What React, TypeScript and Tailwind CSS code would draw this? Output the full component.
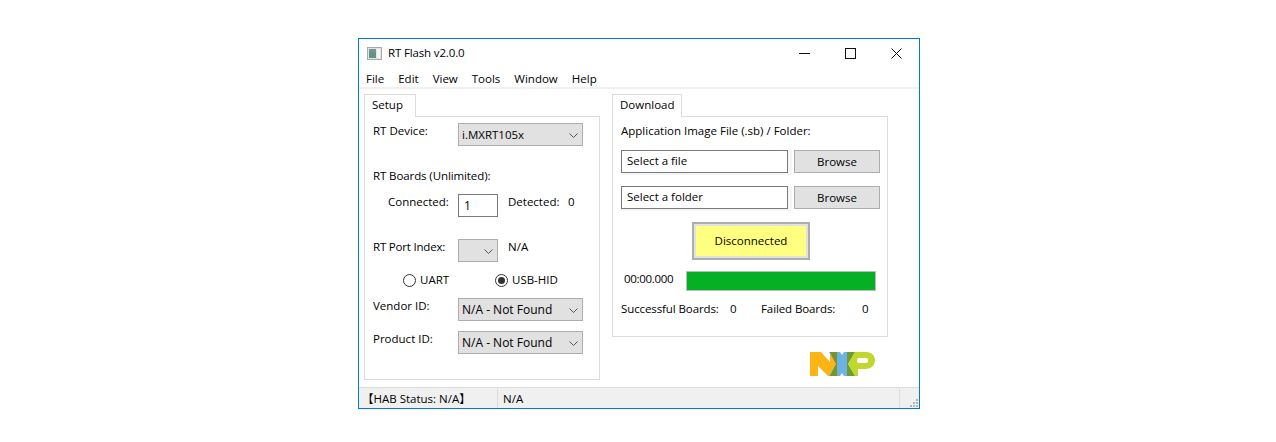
const Chevron = () => (
  <svg width="9" height="5" viewBox="0 0 9 5" className="shrink-0">
    <path d="M0.5 0.5L4.5 4.5L8.5 0.5" fill="none" stroke="#555" />
  </svg>
);

const Combo = ({ value, className }: { value?: string; className: string }) => (
  <div className={`flex h-[23px] items-center justify-between border border-[#adadad] bg-[#e1e1e1] pl-[3px] pr-[4px] pt-[1px] ${className}`}>
    <span>{value}</span>
    <Chevron />
  </div>
);

const Radio = ({ label, checked }: { label: string; checked?: boolean }) => (
  <div className="flex items-center gap-[4px]">
    <span className="flex h-[13px] w-[13px] items-center justify-center rounded-full border border-[#333] bg-white">
      {checked && <span className="h-[7px] w-[7px] rounded-full bg-[#333]" />}
    </span>
    <span>{label}</span>
  </div>
);

const PathRow = ({ text, className }: { text: string; className: string }) => (
  <div className={`flex items-start ${className}`}>
    <div className="bg-[#f6f6f6] pr-[4px] pb-[2px]">
      <div className="flex h-[23px] w-[167px] items-center border border-[#7a7a7a] bg-white pb-[2px] pl-[5px]">{text}</div>
    </div>
    <button className="ml-[2px] h-[23px] w-[86px] border border-[#adadad] bg-[#e1e1e1] text-center">Browse</button>
  </div>
);

const NxpLogo = () => (
  <svg width="65" height="24" viewBox="0 0 65 24">
    <path d="M0 0H11L20 10V0H27V24H18L8 14V24H0Z" fill="#fdb515" />
    <path d="M19 0H30L32 3L34 0H45L38 12L45 24H34L32 21L30 24H19L26 12Z" fill="#6cb2e6" />
    <path d="M20 0H27V24H20L26 12Z" fill="#7b9424" />
    <path d="M37 0H45L38 12L45 24H37Z" fill="#6f9c2f" />
    <path d="M45 0H56C61 0 65 3 65 8C65 13 61 17 56 17H48V24H45L38 12Z" fill="#c1d72e" />
    <rect x="47" y="6" width="11" height="5" rx="2" fill="#ffffff" />
  </svg>
);

export default function App() {
  return (
    <div className="flex h-[442px] w-[1276px] bg-white pt-[38px] pl-[358px] font-['Open_Sans','Noto_Sans_CJK_SC',sans-serif] text-[11.5px] leading-[16px] text-black">
      <div className="flex h-[371px] w-[562px] flex-col border border-[#0078d7] bg-white">
        {/* title bar */}
        <div className="flex h-[28px] shrink-0 items-center pl-[8px]">
          <svg width="15" height="13" viewBox="0 0 15 13" className="mr-[6px]">
            <rect width="15" height="13" fill="#a8a8a8" />
            <rect x="1" y="1" width="13" height="11" fill="#e4e4e4" />
            <rect x="2" y="2" width="7" height="9" fill="#5f9388" />
            <rect x="2" y="2" width="7" height="3" fill="#7d8f99" />
            <rect x="10" y="2" width="3" height="9" fill="#f6f6f6" />
          </svg>
          <span className="tracking-[-0.15px]">RT Flash v2.0.0</span>
          <div className="ml-auto flex items-center gap-[35px] pr-[17px]">
            <svg width="11" height="11" viewBox="0 0 11 11"><path d="M0 5.5H11" stroke="#111" /></svg>
            <svg width="11" height="11" viewBox="0 0 11 11"><rect x="0.5" y="0.5" width="10" height="10" fill="none" stroke="#111" /></svg>
            <svg width="11" height="11" viewBox="0 0 11 11"><path d="M0.5 0.5L10.5 10.5M10.5 0.5L0.5 10.5" stroke="#111" /></svg>
          </div>
        </div>
        {/* menu */}
        <div className="flex h-[22px] shrink-0 items-center gap-[14px] border-b-2 border-[#f0f0f0] pt-[4px] pl-[7px]">
          {["File", "Edit", "View", "Tools", "Window", "Help"].map((m) => (
            <span key={m}>{m}</span>
          ))}
        </div>
        {/* panels */}
        <div className="flex flex-1 pt-[5px] pl-[5px]">
          <div className="flex w-[236px] flex-col">
            <div className="z-10 -mb-px flex h-[23px] w-[52px] items-center border border-b-0 border-[#dcdcdc] bg-white pb-[2px] pl-[7px]">Setup</div>
            <div className="flex-1 border border-[#dcdcdc] pl-[8px]">
              <div className="mt-[6px] flex items-start">
                <span className="w-[85px]">RT Device:</span>
                <Combo value="i.MXRT105x" className="w-[125px]" />
              </div>
              <div className="mt-[22px] tracking-[-0.1px]">RT Boards (Unlimited):</div>
              <div className="mt-[10px] flex items-start">
                <span className="w-[85px] pl-[15px]">Connected:</span>
                <div className="h-[23px] w-[40px] border border-[#7a7a7a] pl-[5px] pt-[3px] text-[12px]">1</div>
                <span className="ml-[10px] w-[60px]">Detected:</span>
                <span>0</span>
              </div>
              <div className="mt-[22px] flex items-start">
                <span className="w-[85px] tracking-[-0.2px]">RT Port Index:</span>
                <Combo className="w-[40px] justify-end" />
                <span className="ml-[10px]">N/A</span>
              </div>
              <div className="mt-[9px] flex h-[18px] items-center pl-[30px]">
                <div className="w-[92px]"><Radio label="UART" /></div>
                <Radio label="USB-HID" checked />
              </div>
              <div className="mt-[9px] flex items-start">
                <span className="w-[85px]">Vendor ID:</span>
                <Combo value="N/A - Not Found" className="w-[125px] text-[12px]" />
              </div>
              <div className="mt-[10px] flex items-start">
                <span className="w-[85px]">Product ID:</span>
                <Combo value="N/A - Not Found" className="w-[125px] text-[12px]" />
              </div>
            </div>
          </div>
          <div className="ml-[12px] flex w-[276px] flex-col">
            <div className="z-10 -mb-px flex h-[23px] w-[70px] items-center border border-b-0 border-[#dcdcdc] bg-white pb-[2px] pl-[7px]">Download</div>
            <div className="h-[221px] border border-[#dcdcdc] pl-[8px]">
              <div className="mt-[6px]">Application Image File (.sb) / Folder:</div>
              <PathRow text="Select a file" className="mt-[11px]" />
              <PathRow text="Select a folder" className="mt-[11px]" />
              <div className="mt-[11px] ml-[71px] flex h-[38px] w-[118px] items-center justify-center border-[2px] border-[#adadad] bg-[#e1e1e1] p-[2px]">
                <div className="flex h-full w-full items-center justify-center bg-[#ffff80]">Disconnected</div>
              </div>
              <div className="mt-[11px] flex items-start pl-[3px]">
                <span className="w-[62px] tracking-[-0.3px]">00:00.000</span>
                <div className="h-[20px] w-[190px] border border-[#bcbcbc] bg-[#06b025]" />
              </div>
              <div className="mt-[10px] flex">
                <span className="w-[109px] tracking-[-0.1px]">Successful Boards:</span>
                <span className="w-[31px]">0</span>
                <span className="w-[101px] tracking-[-0.1px]">Failed Boards:</span>
                <span>0</span>
              </div>
            </div>
            <div className="mt-[15px] ml-[198px]"><NxpLogo /></div>
          </div>
        </div>
        {/* status bar */}
        <div className="mt-[7px] flex h-[21px] shrink-0 items-center border-t border-[#dcdcdc] bg-[#f0f0f0] pt-[1px]">
          <span className="flex h-full w-[139px] items-center border-r border-[#dcdcdc] pl-[3px]">【HAB Status: N/A】</span>
          <span className="pl-[5px]">N/A</span>
          <div className="relative ml-auto h-full w-[20px] border-l border-[#dcdcdc]">
            <svg width="12" height="12" viewBox="0 0 12 12" className="absolute right-[0px] bottom-[0px]">
              {[[9, 1], [6, 4], [9, 4], [3, 7], [6, 7], [9, 7]].map(([x, y]) => (
                <rect key={`${x}-${y}`} x={x} y={y + 2} width="2" height="2" fill="#b5b5b5" />
              ))}
            </svg>
          </div>
        </div>
      </div>
    </div>
  );
}
